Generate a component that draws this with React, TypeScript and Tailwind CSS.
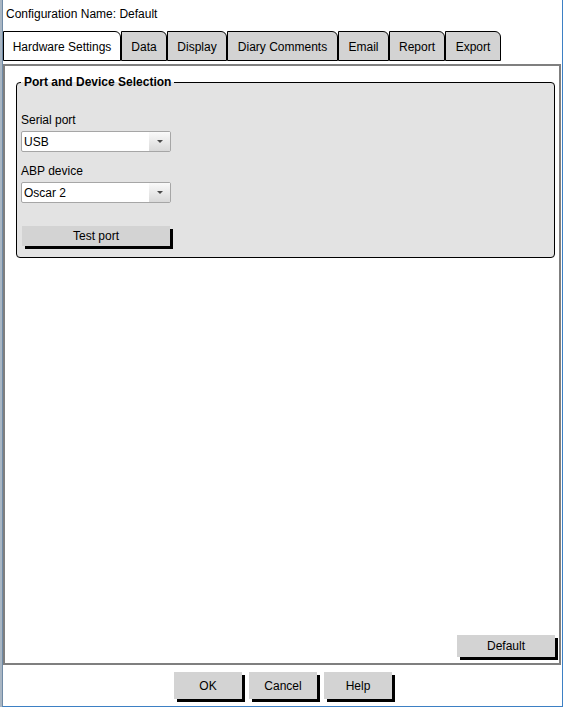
import React from 'react';

interface Tab {
  label: string;
  width: string;
  active?: boolean;
}

const tabs: Tab[] = [
  { label: 'Hardware Settings', width: 'w-[118px]', active: true },
  { label: 'Data', width: 'w-[46px]' },
  { label: 'Display', width: 'w-[60px]' },
  { label: 'Diary Comments', width: 'w-[111px]' },
  { label: 'Email', width: 'w-[51px]' },
  { label: 'Report', width: 'w-[56px]' },
  { label: 'Export', width: 'w-[56px]' },
];

function ComboBox({ value }: { value: string }) {
  return (
    <div className="flex h-[21px] w-[150px] items-stretch rounded-[2px] border border-[#a6a6a6] bg-white">
      <span className="flex flex-1 items-center pl-[2px]">{value}</span>
      <span className="flex w-[21px] items-center justify-center bg-gradient-to-b from-[#fafafa] to-[#d9d9d9]">
        <span className="h-0 w-0 border-x-[3px] border-t-[3px] border-x-transparent border-t-[#4a4a4a]" />
      </span>
    </div>
  );
}

function PushButton({ label, size }: { label: string; size: string }) {
  return (
    <button className={`${size} flex items-center justify-center bg-[#d3d3d3] shadow-[3px_3px_0_#000]`}>
      {label}
    </button>
  );
}

export default function App() {
  return (
    <div className="flex h-[707px] w-[565px] bg-white font-['Liberation_Sans',Arial,sans-serif] text-[12px] leading-[16px] text-black">
      {/* desktop peeking through on the left */}
      <div className="w-[2px] bg-[#a9b6c3]" />

      <div className="flex w-[561px] flex-col border-l border-r border-b border-l-[#6f8aa5] border-r-[#3d80c4] border-b-[#3d80c4]">
        <div className="flex h-[27px] items-center pl-[3px] pt-[1px]">Configuration Name: Default</div>

        {/* tabs */}
        <div className="mt-[4px] flex">
          {tabs.map((tab) => (
            <div
              key={tab.label}
              className={`${tab.width} flex h-[30px] items-center justify-center rounded-tr-[6px] border border-black pt-[1px] ${
                tab.active ? 'bg-white' : 'bg-[#d3d3d3]'
              }`}
            >
              {tab.label}
            </div>
          ))}
        </div>

        {/* tab page */}
        <div className="mt-[3px] mr-[1px] flex h-[601px] flex-col border-2 border-[#7f7f7f] bg-white">
          <fieldset className="mt-[8px] ml-[11px] mr-[4px] rounded-[4px] border border-black bg-[#e3e3e3] px-[4px] pt-[22px] pb-[11px]">
            <legend className="px-[3px] font-bold">Port and Device Selection</legend>

            <div>Serial port</div>
            <div className="mt-[3px]">
              <ComboBox value="USB" />
            </div>

            <div className="mt-[11px]">ABP device</div>
            <div className="mt-[3px]">
              <ComboBox value="Oscar 2" />
            </div>

            <div className="mt-[23px] ml-[1px]">
              <PushButton label="Test port" size="h-[20px] w-[148px]" />
            </div>
          </fieldset>

          <div className="mt-auto mb-[6px] mr-[4px] flex justify-end">
            <PushButton label="Default" size="h-[22px] w-[98px]" />
          </div>
        </div>

        {/* dialog buttons */}
        <div className="flex gap-[7px] pt-[7px] pl-[171px]">
          <PushButton label="OK" size="h-[27px] w-[68px]" />
          <PushButton label="Cancel" size="h-[27px] w-[68px]" />
          <PushButton label="Help" size="h-[27px] w-[68px]" />
        </div>
      </div>
    </div>
  );
}
